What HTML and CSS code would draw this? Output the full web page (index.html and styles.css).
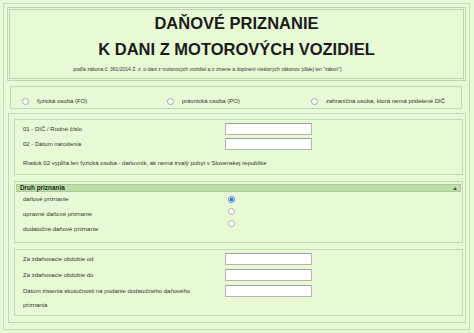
FILE: index.html
```html
<!DOCTYPE html>
<html lang="sk">
<head>
<meta charset="utf-8">
<title>Daňové priznanie</title>
<link rel="stylesheet" href="styles.css">
</head>
<body>
<div class="frame">
  <div class="title-box">
    <h1 class="title">DAŇOVÉ PRIZNANIE</h1>
    <h1 class="title">K DANI Z MOTOROVÝCH VOZIDIEL</h1>
    <p class="subtitle">podľa zákona č. 361/2014 Z. z. o dani z motorových vozidiel a o zmene a doplnení niektorých zákonov (ďalej len "zákon")</p>
  </div>

  <div class="person-box">
    <label class="person"><span class="radio"></span>fyzická osoba (FO)</label>
    <label class="person"><span class="radio"></span>právnická osoba (PO)</label>
    <label class="person"><span class="radio"></span>zahraničná osoba, ktorá nemá pridelené DIČ</label>
  </div>

  <div class="main-box">
    <div class="section dic">
      <div class="row"><span class="label">01 - DIČ / Rodné číslo</span><span class="input"></span></div>
      <div class="row"><span class="label">02 - Dátum narodenia</span><span class="input"></span></div>
      <p class="note">Riadok 02 vypĺňa len fyzická osoba - daňovník, ak nemá trvalý pobyt v Slovenskej republike</p>
    </div>

    <div class="section druh">
      <div class="druh-head"><span>Druh priznania</span><span class="caret"></span></div>
      <div class="druh-body">
        <div class="druh-labels">
          <span>daňové priznanie</span>
          <span>opravné daňové priznanie</span>
          <span>dodatočné daňové priznanie</span>
        </div>
        <div class="druh-radios">
          <span class="radio checked"></span>
          <span class="radio"></span>
          <span class="radio"></span>
        </div>
      </div>
    </div>

    <div class="section dates">
      <div class="row"><span class="label">Za zdaňovacie obdobie od</span><span class="input"></span></div>
      <div class="row"><span class="label">Za zdaňovacie obdobie do</span><span class="input"></span></div>
      <div class="row"><span class="label label-wrap">Dátum zistenia skutočnosti na podanie dodatočného daňového priznania</span><span class="input"></span></div>
    </div>
  </div>
</div>
</body>
</html>
```

FILE: styles.css
```css
html, body {
  margin: 0;
  padding: 0;
}
body {
  background: #e8f9d6;
  font-family: "Liberation Sans", Arial, sans-serif;
  color: #2a2a2a;
  width: 474px;
  height: 333px;
  overflow: hidden;
}
.frame {
  margin: 3px 4px 0 3px;
  border: 1px solid #c9d8bb;
  padding: 3px 3px 6px 3px;
}
.title-box {
  border: 3px double #c3d3b2;
  padding: 0 0 5px 0;
  text-align: center;
}
.title {
  margin: 0;
  font-size: 16.5px;
  line-height: 26px;
  font-weight: bold;
  color: #1b1b1b;
}
.subtitle {
  margin: 3px 0 0 0;
  padding-right: 58px;
  font-size: 5px;
  line-height: 8px;
  color: #333;
}
.person-box {
  margin: 5px 4px 0 3px;
  border: 1px solid #c6d6b6;
  padding: 10px 0 3px 11px;
  display: grid;
  grid-template-columns: 145px 144px 1fr;
}
.person {
  display: flex;
  align-items: center;
  font-size: 6px;
  line-height: 8px;
  color: #333;
}
.person .radio {
  margin-right: 8px;
}
.radio {
  display: block;
  width: 5px;
  height: 5px;
  border: 1px solid #a9a9a9;
  border-radius: 50%;
  background: #fff;
  flex: none;
}
.radio.checked {
  border-color: #3b78d8;
  background: radial-gradient(circle, #2f6fd6 0 1.6px, #fff 2.1px);
}
.main-box {
  margin: 4px 0 0 1px;
  border: 1px solid #c6d6b6;
  padding: 5px 2px 6px 5px;
  display: flex;
  flex-direction: column;
  gap: 6px;
}
.section {
  border: 1px solid #c6d6b6;
}
.dic {
  padding: 3px 0 6px 8px;
}
.dates {
  padding: 3px 0 3px 8px;
}
.row {
  display: grid;
  grid-template-columns: 202px 87px;
  align-items: start;
}
.row + .row {
  margin-top: 4px;
}
.dic .row + .row {
  margin-top: 3px;
}
.label {
  font-size: 6px;
  line-height: 12px;
  color: #333;
}
.label-wrap {
  padding-right: 20px;
  line-height: 14px;
  margin-top: -1px;
}
.input {
  display: block;
  height: 10px;
  background: #fff;
  border: 1px solid #b4b4b4;
  border-top-color: #9d9d9d;
  border-radius: 1px;
}
.note {
  margin: 8px 0 0 0;
  font-size: 6px;
  line-height: 10px;
  color: #333;
}
.druh {
  padding: 2px 1px 5px 1px;
}
.druh-head {
  height: 6px;
  border: 1px solid #a9c997;
  background: #bcdfa9;
  display: flex;
  justify-content: space-between;
  align-items: center;
  padding: 0 3px 0 3px;
  font-size: 6.4px;
  line-height: 6px;
  font-weight: bold;
  color: #222;
}
.caret {
  width: 0;
  height: 0;
  border-left: 2px solid transparent;
  border-right: 2px solid transparent;
  border-bottom: 3px solid #4a5a44;
}
.druh-body {
  display: grid;
  grid-template-columns: 205px 20px;
  padding-left: 7px;
}
.druh-labels {
  display: flex;
  flex-direction: column;
  font-size: 6px;
  line-height: 15px;
  color: #333;
}
.druh-radios {
  display: flex;
  flex-direction: column;
  gap: 5px;
  padding-top: 4px;
}
```
